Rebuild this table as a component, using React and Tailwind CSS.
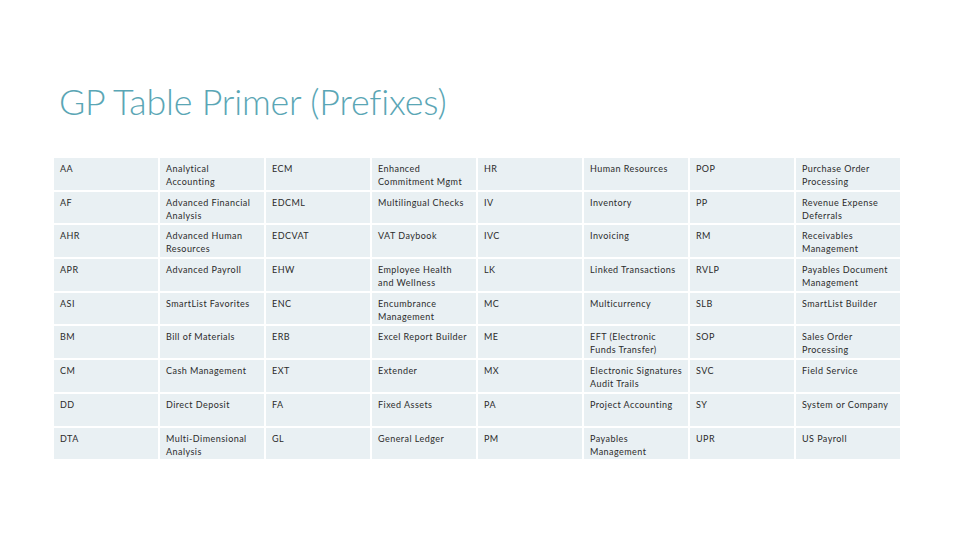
import React from 'react'

// line breaks follow the original slide
const rows = [
  ['AA', 'Analytical\nAccounting', 'ECM', 'Enhanced\nCommitment Mgmt', 'HR', 'Human Resources', 'POP', 'Purchase Order\nProcessing'],
  ['AF', 'Advanced Financial\nAnalysis', 'EDCML', 'Multilingual Checks', 'IV', 'Inventory', 'PP', 'Revenue Expense\nDeferrals'],
  ['AHR', 'Advanced Human\nResources', 'EDCVAT', 'VAT Daybook', 'IVC', 'Invoicing', 'RM', 'Receivables\nManagement'],
  ['APR', 'Advanced Payroll', 'EHW', 'Employee Health\nand Wellness', 'LK', 'Linked Transactions', 'RVLP', 'Payables Document\nManagement'],
  ['ASI', 'SmartList Favorites', 'ENC', 'Encumbrance\nManagement', 'MC', 'Multicurrency', 'SLB', 'SmartList Builder'],
  ['BM', 'Bill of Materials', 'ERB', 'Excel Report Builder', 'ME', 'EFT (Electronic\nFunds Transfer)', 'SOP', 'Sales Order\nProcessing'],
  ['CM', 'Cash Management', 'EXT', 'Extender', 'MX', 'Electronic Signatures\nAudit Trails', 'SVC', 'Field Service'],
  ['DD', 'Direct Deposit', 'FA', 'Fixed Assets', 'PA', 'Project Accounting', 'SY', 'System or Company'],
  ['DTA', 'Multi-Dimensional\nAnalysis', 'GL', 'General Ledger', 'PM', 'Payables\nManagement', 'UPR', 'US Payroll'],
]

export default function App() {
  return (
    <div className="w-[960px] h-[540px] bg-white overflow-hidden font-['Lato','Liberation_Sans',sans-serif]">
      {/* title */}
      <h1 className="pl-[59px] pt-[80px] text-[35.8px] leading-[44px] font-light text-[#5aa6b5] tracking-[-0.2px]">
        GP Table Primer (Prefixes)
      </h1>

      {/* prefix table */}
      <div className="ml-[54px] mt-[34px] w-[846px] grid grid-cols-8 auto-rows-[31.7px] gap-[2px]">
        {rows.map((r, i) =>
          r.map((cell, j) => (
            <div
              key={i + '-' + j}
              className="bg-[#e9f0f3] pl-[6px] pr-[2px] pt-[4px] text-[9px] leading-[13px] text-[#2b2b2b] tracking-[0.45px] whitespace-pre-line"
            >
              {cell}
            </div>
          ))
        )}
      </div>
    </div>
  )
}
